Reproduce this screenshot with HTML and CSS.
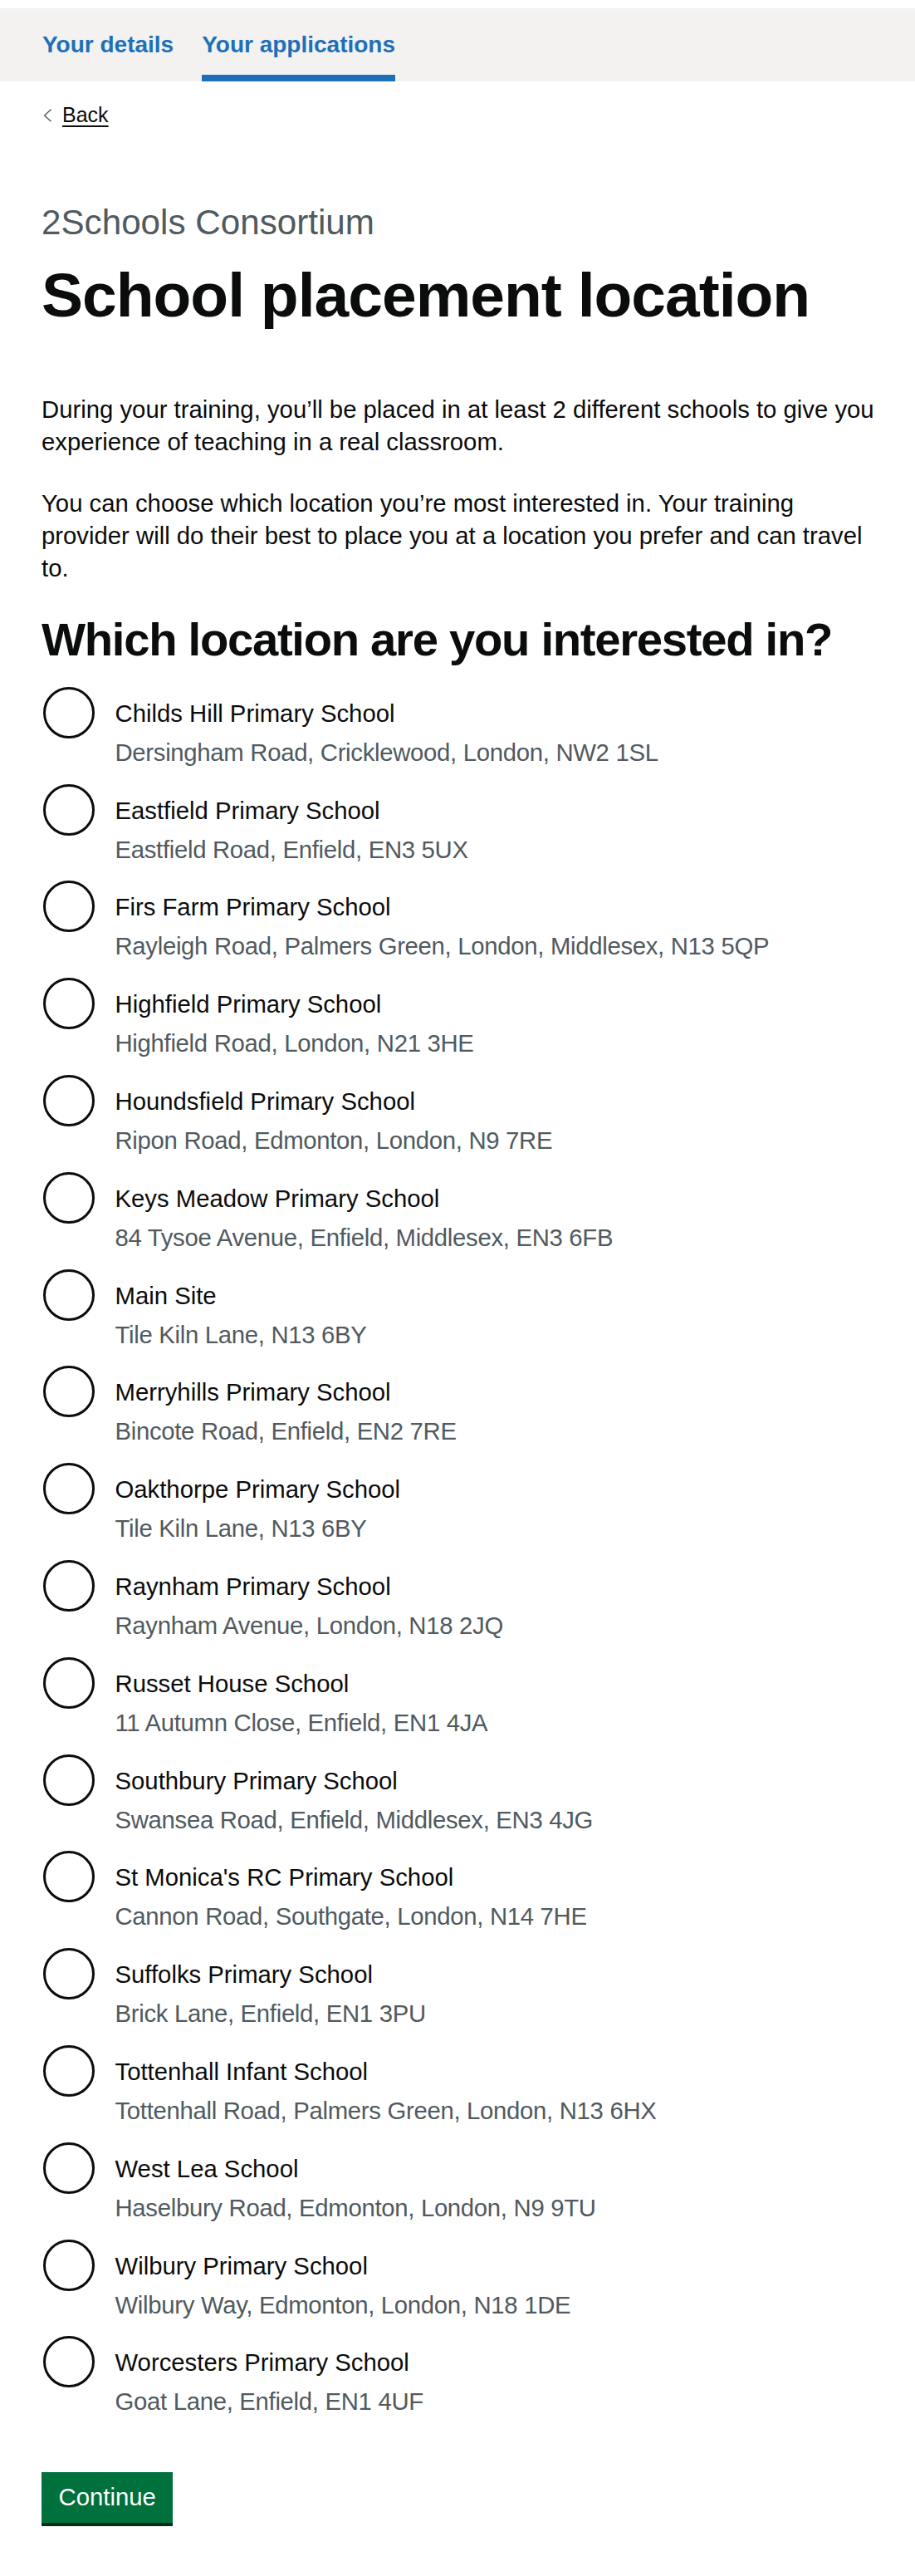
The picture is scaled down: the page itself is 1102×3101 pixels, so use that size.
FILE: index.html
```html
<!DOCTYPE html>
<html lang="en">
<head>
<meta charset="utf-8">
<title>School placement location</title>
<link rel="stylesheet" href="styles.css">
</head>
<body>
<nav class="subnav">
  <a class="subnav-item" href="#">Your details</a>
  <a class="subnav-item subnav-item--current" href="#">Your applications</a>
</nav>
<div class="page">
  <a class="back-link" href="#">
    <svg class="back-chevron" width="11" height="16" viewBox="0 0 11 16" aria-hidden="true"><polyline points="9.5,0.8 1.6,8 9.5,15.2" fill="none" stroke="#505a5f" stroke-width="1.4"/></svg>
    <span class="back-text">Back</span>
  </a>
  <main class="main">
    <span class="caption">2Schools Consortium</span>
    <h1 class="heading-xl">School placement location</h1>
    <p class="body">During your training, you’ll be placed in at least 2 different schools to give you experience of teaching in a real classroom.</p>
    <p class="body body--second">You can choose which location you’re most interested in. Your training provider will do their best to place you at a location you prefer and can travel to.</p>
    <fieldset class="fieldset">
      <legend class="heading-l">Which location are you interested in?</legend>
      <div class="radios">
        <div class="radio-item"><input class="radio-input" type="radio" name="location" id="loc-1"><div class="radio-text"><label class="radio-label" for="loc-1">Childs Hill Primary School</label><div class="radio-hint">Dersingham Road, Cricklewood, London, NW2 1SL</div></div></div>
        <div class="radio-item"><input class="radio-input" type="radio" name="location" id="loc-2"><div class="radio-text"><label class="radio-label" for="loc-2">Eastfield Primary School</label><div class="radio-hint">Eastfield Road, Enfield, EN3 5UX</div></div></div>
        <div class="radio-item"><input class="radio-input" type="radio" name="location" id="loc-3"><div class="radio-text"><label class="radio-label" for="loc-3">Firs Farm Primary School</label><div class="radio-hint">Rayleigh Road, Palmers Green, London, Middlesex, N13 5QP</div></div></div>
        <div class="radio-item"><input class="radio-input" type="radio" name="location" id="loc-4"><div class="radio-text"><label class="radio-label" for="loc-4">Highfield Primary School</label><div class="radio-hint">Highfield Road, London, N21 3HE</div></div></div>
        <div class="radio-item"><input class="radio-input" type="radio" name="location" id="loc-5"><div class="radio-text"><label class="radio-label" for="loc-5">Houndsfield Primary School</label><div class="radio-hint">Ripon Road, Edmonton, London, N9 7RE</div></div></div>
        <div class="radio-item"><input class="radio-input" type="radio" name="location" id="loc-6"><div class="radio-text"><label class="radio-label" for="loc-6">Keys Meadow Primary School</label><div class="radio-hint">84 Tysoe Avenue, Enfield, Middlesex, EN3 6FB</div></div></div>
        <div class="radio-item"><input class="radio-input" type="radio" name="location" id="loc-7"><div class="radio-text"><label class="radio-label" for="loc-7">Main Site</label><div class="radio-hint">Tile Kiln Lane, N13 6BY</div></div></div>
        <div class="radio-item"><input class="radio-input" type="radio" name="location" id="loc-8"><div class="radio-text"><label class="radio-label" for="loc-8">Merryhills Primary School</label><div class="radio-hint">Bincote Road, Enfield, EN2 7RE</div></div></div>
        <div class="radio-item"><input class="radio-input" type="radio" name="location" id="loc-9"><div class="radio-text"><label class="radio-label" for="loc-9">Oakthorpe Primary School</label><div class="radio-hint">Tile Kiln Lane, N13 6BY</div></div></div>
        <div class="radio-item"><input class="radio-input" type="radio" name="location" id="loc-10"><div class="radio-text"><label class="radio-label" for="loc-10">Raynham Primary School</label><div class="radio-hint">Raynham Avenue, London, N18 2JQ</div></div></div>
        <div class="radio-item"><input class="radio-input" type="radio" name="location" id="loc-11"><div class="radio-text"><label class="radio-label" for="loc-11">Russet House School</label><div class="radio-hint">11 Autumn Close, Enfield, EN1 4JA</div></div></div>
        <div class="radio-item"><input class="radio-input" type="radio" name="location" id="loc-12"><div class="radio-text"><label class="radio-label" for="loc-12">Southbury Primary School</label><div class="radio-hint">Swansea Road, Enfield, Middlesex, EN3 4JG</div></div></div>
        <div class="radio-item"><input class="radio-input" type="radio" name="location" id="loc-13"><div class="radio-text"><label class="radio-label" for="loc-13">St Monica's RC Primary School</label><div class="radio-hint">Cannon Road, Southgate, London, N14 7HE</div></div></div>
        <div class="radio-item"><input class="radio-input" type="radio" name="location" id="loc-14"><div class="radio-text"><label class="radio-label" for="loc-14">Suffolks Primary School</label><div class="radio-hint">Brick Lane, Enfield, EN1 3PU</div></div></div>
        <div class="radio-item"><input class="radio-input" type="radio" name="location" id="loc-15"><div class="radio-text"><label class="radio-label" for="loc-15">Tottenhall Infant School</label><div class="radio-hint">Tottenhall Road, Palmers Green, London, N13 6HX</div></div></div>
        <div class="radio-item"><input class="radio-input" type="radio" name="location" id="loc-16"><div class="radio-text"><label class="radio-label" for="loc-16">West Lea School</label><div class="radio-hint">Haselbury Road, Edmonton, London, N9 9TU</div></div></div>
        <div class="radio-item"><input class="radio-input" type="radio" name="location" id="loc-17"><div class="radio-text"><label class="radio-label" for="loc-17">Wilbury Primary School</label><div class="radio-hint">Wilbury Way, Edmonton, London, N18 1DE</div></div></div>
        <div class="radio-item"><input class="radio-input" type="radio" name="location" id="loc-18"><div class="radio-text"><label class="radio-label" for="loc-18">Worcesters Primary School</label><div class="radio-hint">Goat Lane, Enfield, EN1 4UF</div></div></div>
      </div>
    </fieldset>
    <button class="button" type="button">Continue</button>
  </main>
</div>
</body>
</html>
```
FILE: styles.css
```css
html, body {
  margin: 0;
  padding: 0;
  background: #ffffff;
}

body {
  font-family: "Liberation Sans", Arial, sans-serif;
  color: #0b0c0c;
  padding-bottom: 60px;
}

.subnav {
  display: flex;
  gap: 34px;
  margin-top: 10px;
  height: 88px;
  box-sizing: border-box;
  padding-left: 51px;
  background: #f3f2f1;
}

.subnav-item {
  display: block;
  box-sizing: border-box;
  height: 88px;
  padding-top: 23.8px;
  font-size: 28px;
  line-height: 39px;
  font-weight: 700;
  color: #1d70b8;
  text-decoration: none;
}

.subnav-item--current {
  border-bottom: 8px solid #1d70b8;
}

.page {
  padding: 0 44px 0 50px;
}

.back-link {
  display: inline-flex;
  align-items: center;
  gap: 12px;
  margin-top: 24.8px;
  font-size: 25px;
  line-height: 31px;
  color: #0b0c0c;
  text-decoration: none;
}

.back-chevron {
  display: block;
  margin-left: 2px;
  margin-top: 1px;
}

.back-text {
  text-decoration: underline;
  text-decoration-thickness: 1.6px;
  text-underline-offset: 4px;
}

.main {
  display: block;
}

.caption {
  display: block;
  margin-top: 90px;
  font-size: 42.2px;
  line-height: 47px;
  color: #505a5f;
}

.heading-xl {
  margin: 25px 0 0 0;
  font-size: 75px;
  line-height: 78px;
  font-weight: 700;
  letter-spacing: -1px;
}

.body {
  margin: 79.3px 0 0 0;
  font-size: 29.3px;
  line-height: 39px;
}

.body--second {
  margin-top: 35px;
}

.fieldset {
  margin: 36px 0 0 0;
  padding: 0;
  border: 0;
  min-width: 0;
}

.heading-l {
  display: block;
  padding: 0;
  margin: 0 0 25.2px 0;
  font-size: 56.25px;
  line-height: 62.5px;
  font-weight: 700;
  letter-spacing: -1.3px;
}

.radios {
  display: flex;
  flex-direction: column;
  gap: 18.8px;
}

.radio-item {
  display: flex;
  align-items: flex-start;
  height: 98px;
}

.radio-input {
  appearance: none;
  -webkit-appearance: none;
  flex-shrink: 0;
  box-sizing: border-box;
  width: 62px;
  height: 62px;
  margin: 0 0 0 2px;
  border: 3px solid #0b0c0c;
  border-radius: 50%;
  background: #ffffff;
}

.radio-text {
  display: flex;
  flex-direction: column;
  gap: 8px;
  padding-left: 24.5px;
  padding-top: 12px;
}

.radio-label {
  font-size: 29.3px;
  line-height: 39px;
  color: #0b0c0c;
}

.radio-hint {
  font-size: 29.3px;
  line-height: 39px;
  letter-spacing: -0.3px;
  color: #505a5f;
}

.button {
  display: block;
  margin: 66px 0 0 0;
  box-sizing: border-box;
  height: 61px;
  padding: 15px 20.5px 16px;
  border: 0;
  border-radius: 0;
  background: #00703c;
  box-shadow: 0 4px 0 #002d18;
  color: #ffffff;
  font-family: "Liberation Sans", Arial, sans-serif;
  font-size: 29.3px;
  line-height: 30px;
}
```
